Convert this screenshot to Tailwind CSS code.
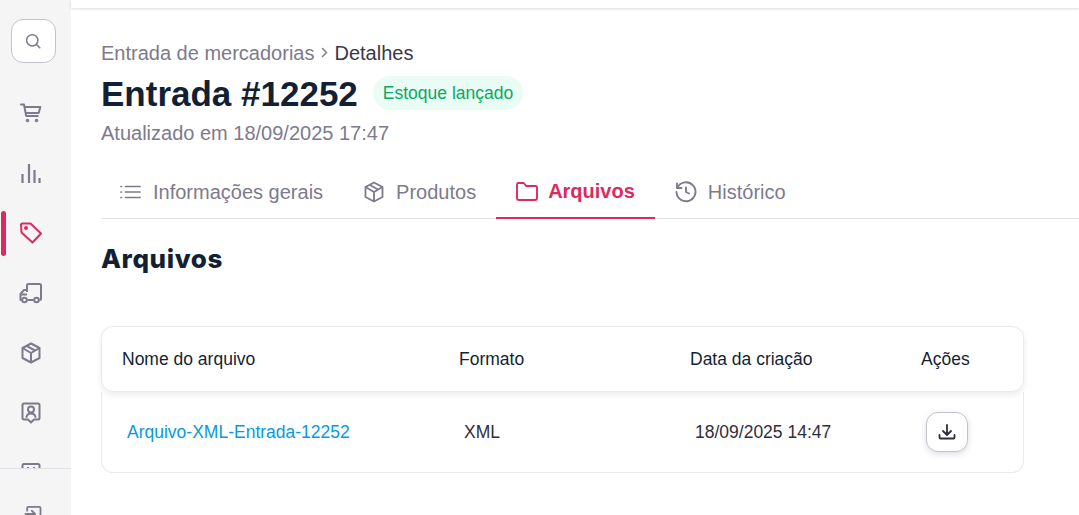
<!DOCTYPE html>
<html lang="pt-BR">
<head>
  <meta charset="UTF-8" />
  <title>Entrada #12252</title>
  <script src="https://cdn.jsdelivr.net/npm/@tailwindcss/browser@4"></script>
</head>
<body class="h-[515px] overflow-hidden bg-white flex font-['Liberation_Sans',Arial,sans-serif]">

  <!-- Sidebar -->
  <aside class="w-[71px] h-full shrink-0 bg-[#f5f5f5] flex flex-col text-[#7d7a8c]">
    <div class="h-[468px] shrink-0 overflow-hidden flex flex-col">
      <div class="pt-[19px] pl-[11px]">
        <button class="w-[45px] h-[44px] bg-white border border-[#c4c3cc] rounded-xl flex items-center justify-center pr-[2px]">
          <svg class="w-[18px] h-[18px]" viewBox="0 0 24 24" fill="none" stroke="currentColor" stroke-width="2" stroke-linecap="round"><circle cx="11" cy="11" r="7.5"/><path d="m21 21-4.500-4.500"/></svg>
        </button>
      </div>
      <nav class="flex flex-col mt-[20px] w-[61px]">
        <a class="h-[60px] flex items-center justify-center">
          <svg class="w-6 h-6" viewBox="0 0 24 24" fill="none" stroke="currentColor" stroke-width="2" stroke-linecap="round" stroke-linejoin="round"><path d="M2 3.500h3l2.200 11.500h11.500"/><path d="M5.800 6h15.500l-1.600 6H7"/><circle cx="8.500" cy="19.500" r=".8"/><circle cx="17.500" cy="19.500" r=".8"/></svg>
        </a>
        <a class="h-[60px] flex items-center justify-center">
          <svg class="w-6 h-6" viewBox="0 0 24 24" fill="none" stroke="currentColor" stroke-width="2.200"><path d="M3.500 22v-9"/><path d="M10 22V3"/><path d="M15.500 22V9"/><path d="M20.500 22v-5"/></svg>
        </a>
        <a class="relative h-[60px] flex items-center justify-center text-[#dc2a5f]">
          <span class="absolute left-[1px] top-[8px] w-[5px] h-[45px] rounded-full bg-[#dc2a5f]"></span>
          <svg class="w-6 h-6" viewBox="0 0 24 24" fill="none" stroke="currentColor" stroke-width="2" stroke-linejoin="round"><path d="M2 3.500 3 2.500h8.500l10.500 10-8.500 9L2.500 11.500z"/><circle cx="7" cy="7" r="1" fill="currentColor"/></svg>
        </a>
        <a class="h-[60px] flex items-center justify-center">
          <svg class="w-6 h-6" viewBox="0 0 24 24" fill="none" stroke="currentColor" stroke-width="2" stroke-linejoin="round"><path d="M8.500 19h6M8 11V4.500A1.500 1.500 0 0 1 9.500 3h11A1.500 1.500 0 0 1 22 4.500V17.500a1.500 1.500 0 0 1-1.500 1.500"/><path d="M8 9H5L1.500 13v6H2.500"/><path d="M1.500 13.500H8"/><circle cx="5.500" cy="19" r="2.300"/><circle cx="17.500" cy="19" r="2.300"/></svg>
        </a>
        <a class="h-[60px] flex items-center justify-center">
          <svg class="w-6 h-6" viewBox="0 0 24 24" fill="none" stroke="currentColor" stroke-width="2" stroke-linejoin="round"><path d="M12 2.500 20.500 7v10L12 21.500 3.500 17V7z"/><path d="M3.500 7 12 12l8.500-5M12 12v9.500M7.500 4.800 16 9.500"/></svg>
        </a>
        <a class="h-[60px] flex items-center justify-center">
          <svg class="w-6 h-6" viewBox="0 0 24 24" fill="none" stroke="currentColor" stroke-width="2" stroke-linejoin="round" stroke-linecap="round"><path d="M5 2.500h14A1.500 1.500 0 0 1 20.500 4v13a1.500 1.500 0 0 1-1.500 1.500h-4l-3 3-3-3H5A1.500 1.500 0 0 1 3.500 17V4A1.500 1.500 0 0 1 5 2.500z"/><circle cx="12" cy="8.500" r="3"/><path d="M7.500 16c.5-2.500 2.300-3.500 4.500-3.500s4 1 4.500 3.500"/></svg>
        </a>
        <a class="h-[60px] flex items-center justify-center">
          <svg class="w-6 h-6" viewBox="0 0 24 24" fill="none" stroke="currentColor" stroke-width="2"><rect x="3.500" y="3" width="17" height="18" rx="1.500"/><path d="M8 7h2M14 7h2"/></svg>
        </a>
      </nav>
    </div>
    <div class="border-t border-[#e2e1e7] pt-[35px]">
      <div class="w-[66px] flex justify-center">
        <svg class="w-5 h-5 shrink-0" viewBox="0 0 24 24" fill="none" stroke="currentColor" stroke-width="2.200" stroke-linecap="round" stroke-linejoin="round"><path d="M5 8V5a1.500 1.500 0 0 1 1.500-1.500h13A1.500 1.500 0 0 1 21 5v14a1.500 1.500 0 0 1-1.500 1.500h-13A1.500 1.500 0 0 1 5 19v-3"/><path d="M3 12h11M10.500 8l4 4-4 4"/></svg>
      </div>
    </div>
  </aside>

  <!-- Main -->
  <div class="flex-1 min-w-0 flex flex-col">
    <div class="h-[8px] shrink-0 bg-white shadow-[0_1px_3px_rgba(30,30,60,0.16)]"></div>

    <main class="pl-[30px]">
      <div class="pt-[33px] h-[56px] flex items-center gap-[4px] text-[20px] leading-[24px] text-[#7d7a8c]">
        <span>Entrada de mercadorias</span>
        <svg class="w-[12px] h-[13px]" viewBox="0 0 12 13" fill="none" stroke="currentColor" stroke-width="1.500" stroke-linecap="round" stroke-linejoin="round"><path d="m4.500 2.500 4 4-4 4"/></svg>
        <span class="text-[#3a3846]">Detalhes</span>
      </div>

      <div class="mt-[13px] h-[34px] flex items-center gap-[15px]">
        <h1 class="text-[35px] leading-[34px] font-bold text-[#131f35]">Entrada #12252</h1>
        <span class="h-[34px] mb-[2px] px-[10px] rounded-full bg-[#e9fdf4] text-[#0ba767] text-[17.5px] leading-[34px]">Estoque lançado</span>
      </div>

      <p class="mt-[10px] text-[20px] leading-[24px] text-[#7d7a8c]">Atualizado em 18/09/2025 17:47</p>

      <!-- Tabs -->
      <div class="mt-[12px] h-[62px] flex border-b border-[#e5e4e9] text-[20px] text-[#7d7a8c]">
        <a class="h-[61px] pt-[8px] pl-[18px] pr-[19px] flex items-center gap-[10px]">
          <svg class="w-6 h-6" viewBox="0 0 24 24" fill="none" stroke="currentColor" stroke-width="1.700" stroke-linecap="round"><path d="M6.500 6.500H21M6.500 12H21M6.500 17.500H21M2 6.500h.5M2 12h.5M2 17.500h.5"/></svg>
          <span>Informações gerais</span>
        </a>
        <a class="h-[61px] pt-[8px] px-[20px] flex items-center gap-[10px]">
          <svg class="w-6 h-6" viewBox="0 0 24 24" fill="none" stroke="currentColor" stroke-width="1.800" stroke-linejoin="round"><path d="M12 2.500 20.500 7v10L12 21.500 3.500 17V7z"/><path d="M3.500 7 12 12l8.500-5M12 12v9.500M7.500 4.800 16 9.500"/></svg>
          <span>Produtos</span>
        </a>
        <a class="h-[62px] pt-[8px] pl-[19px] pr-[20px] flex items-center gap-[9px] border-b-2 border-[#dc2a5f] text-[#dc2a5f] font-bold">
          <svg class="w-6 h-6" viewBox="0 0 24 24" fill="none" stroke="currentColor" stroke-width="1.900" stroke-linejoin="round"><path d="M2 5.500A1.500 1.500 0 0 1 3.500 4h5.200l2.500 3h9.300A1.500 1.500 0 0 1 22 8.500v10.500a2 2 0 0 1-2 2H4a2 2 0 0 1-2-2z"/></svg>
          <span>Arquivos</span>
        </a>
        <a class="h-[61px] pt-[8px] pl-[19px] pr-[20px] flex items-center gap-[10px]">
          <svg class="w-6 h-6" viewBox="0 0 24 24" fill="none" stroke="currentColor" stroke-width="1.900" stroke-linecap="round" stroke-linejoin="round"><path d="M3.500 7.500A9.500 9.500 0 1 1 2.500 12"/><path d="M3 3.500v4.500h4.500"/><path d="M12 7.500V12l3 1.500"/></svg>
          <span>Histórico</span>
        </a>
      </div>

      <h2 class="mt-[24px] text-[26px] leading-[32px] font-extrabold tracking-[0.6px] text-[#131f35] font-['Inter',sans-serif]">Arquivos</h2>

      <!-- Table -->
      <div class="mt-[51px] w-[923px] text-[17.5px]">
        <div class="relative h-[66px] bg-white border border-[#eaeaee] rounded-xl shadow-[0_3px_6px_rgba(30,30,60,0.08)] grid grid-cols-[337px_231px_231px_1fr] items-center pl-[20px] text-[#131f35]">
          <span>Nome do arquivo</span>
          <span>Formato</span>
          <span>Data da criação</span>
          <span>Ações</span>
        </div>
        <div class="h-[81px] border border-t-0 border-[#eaeaee] rounded-b-xl grid grid-cols-[337px_231px_231px_1fr] items-center pl-[25px] text-[#2f2e3a]">
          <a class="text-[#069bdc]">Arquivo-XML-Entrada-12252</a>
          <span>XML</span>
          <span>18/09/2025 14:47</span>
          <button class="w-[42px] h-[40px] bg-white border border-[#c4c3cc] rounded-xl shadow-[0_2px_6px_rgba(30,30,60,0.15)] flex items-center justify-center text-[#2f2e3a]">
            <svg class="w-[20px] h-[20px]" viewBox="0 0 20 20" fill="none" stroke="currentColor" stroke-width="1.800" stroke-linecap="round" stroke-linejoin="round"><path d="M10 3v9M6 9l4 4 4-4"/><path d="M2.500 13v2.500a1 1 0 0 0 1 1h13a1 1 0 0 0 1-1V13"/></svg>
          </button>
        </div>
      </div>
    </main>
  </div>

</body>
</html>
